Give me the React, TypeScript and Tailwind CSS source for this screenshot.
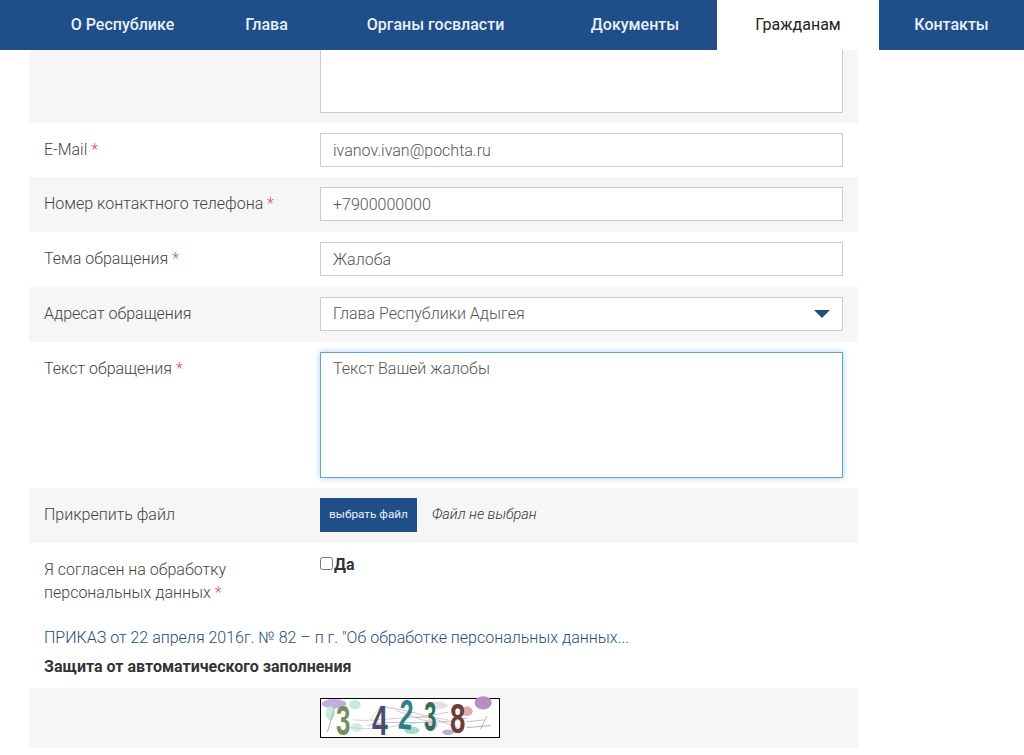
import React from "react";

const navItems = [
  { label: "О Республике", width: "w-[185px]" },
  { label: "Глава", width: "w-[103px]" },
  { label: "Органы госвласти", width: "w-[235px]" },
  { label: "Документы", width: "w-[164px]" },
  { label: "Гражданам", width: "w-[162px]", active: true },
  { label: "Контакты", width: "w-[145px]" },
];

const inputClass =
  "block w-[523px] h-[34px] border border-[#cccccc] bg-white px-[12px] text-[16px] font-light text-[#555] outline-none";

const Star = () => <span className="text-[#d9534f]"> *</span>;

const Row: React.FC<{
  gray?: boolean;
  height: string;
  label?: React.ReactNode;
  children: React.ReactNode;
}> = ({ gray, height, label, children }) => (
  <div className={`flex ${height} ${gray ? "bg-[#f6f6f6]" : "bg-white"}`}>
    <div className="w-[291px] pt-[15px] pl-[15px] text-[16px] leading-[23px] font-light text-[#444]">
      {label}
    </div>
    <div className="pt-[10px]">{children}</div>
  </div>
);

const Captcha = () => (
  <svg width="180" height="40" viewBox="0 0 180 40" className="block overflow-visible border border-black bg-white">
    <ellipse cx="10" cy="5" rx="13" ry="5" fill="#c3aedb" />
    <ellipse cx="32" cy="6" rx="6" ry="5" fill="#c8e8da" />
    <ellipse cx="6" cy="15" rx="5" ry="7" fill="#c6ecd8" />
    <ellipse cx="167" cy="4" rx="9" ry="7" fill="#b48fc6" />
    <ellipse cx="150" cy="13" rx="6" ry="5" fill="#e3abab" />
    <ellipse cx="92" cy="33" rx="8" ry="4" fill="#a8dcc0" />
    <ellipse cx="112" cy="27" rx="7" ry="6" fill="#f2cfcf" />
    <ellipse cx="130" cy="35" rx="6" ry="3" fill="#b9b0e0" />
    <ellipse cx="118" cy="7" rx="12" ry="4" fill="#e2e2e2" />
    <ellipse cx="34" cy="30" rx="6" ry="5" fill="#d5eee0" />
    <g fill="none" strokeWidth="0.8">
      <path d="M3 35 L11 8" stroke="#999" />
      <path d="M30 22 C60 25 95 14 130 22" stroke="#e4b7a0" />
      <path d="M45 28 C70 20 110 30 150 20" stroke="#b5a5d8" />
      <path d="M60 8 C90 12 110 18 140 30" stroke="#b5b5b5" />
      <path d="M25 30 C60 34 80 26 110 24" stroke="#a6d8d8" />
      <path d="M150 30 L175 28" stroke="#999" />
      <path d="M164 32 L171 18" stroke="#999" />
      <path d="M95 20 L130 14" stroke="#d7a8c8" />
      <path d="M48 22 L60 6" stroke="#c8c8c8" />
      <path d="M75 12 L120 28" stroke="#c7b6e2" />
      <path d="M150 24 L168 22" stroke="#aaa" />
    </g>
    <g fontFamily="'Liberation Sans', sans-serif" fontWeight="700" fontSize="44">
      <text transform="translate(12 38) scale(0.62 1)" fill="#748f66">3</text>
      <text transform="translate(50 38) scale(0.68 1)" fill="#454f70">4</text>
      <text transform="translate(77 31) rotate(5) scale(0.6 1)" fill="#2f7f86">2</text>
      <text transform="translate(105 34) scale(0.52 1)" fill="#2f6f58">3</text>
      <text transform="translate(132 36) scale(0.66 1)" fill="#6b4038">8</text>
    </g>
  </svg>
);

export default function App() {
  return (
    <div className="h-[755px] w-[1024px] overflow-hidden bg-white font-['Roboto',sans-serif]">
      <nav className="flex h-[50px] bg-[#1f4e89] pl-[30px]">
        {navItems.map((item) => (
          <div
            key={item.label}
            className={`${item.width} flex h-full shrink-0 items-center justify-center text-[16px] ${
              item.active ? "bg-white font-normal text-[#222]" : "font-medium text-[#e8f1f8]"
            }`}
          >
            {item.label}
          </div>
        ))}
      </nav>

      <div className="ml-[29px] w-[829px]">
        <div className="flex h-[73px] bg-[#f6f6f6]">
          <div className="ml-[291px] h-[63px] w-[523px] border border-t-0 border-[#cccccc] bg-white" />
        </div>

        <Row height="h-[54px]" label={<>E-Mail<Star /></>}>
          <input className={inputClass} value="ivanov.ivan@pochta.ru" readOnly />
        </Row>
        <Row gray height="h-[55px]" label={<>Номер контактного телефона<Star /></>}>
          <input className={inputClass} value="+7900000000" readOnly />
        </Row>
        <Row height="h-[55px]" label={<>Тема обращения<Star /></>}>
          <input className={inputClass} value="Жалоба" readOnly />
        </Row>
        <Row gray height="h-[55px]" label="Адресат обращения">
          <div className={`${inputClass} flex items-center justify-between pr-[12px]`}>
            <span>Глава Республики Адыгея</span>
            <span className="h-0 w-0 border-x-[8px] border-t-[8px] border-x-transparent border-t-[#1f4e79]" />
          </div>
        </Row>
        <Row height="h-[146px]" label={<>Текст обращения<Star /></>}>
          <textarea
            className="block h-[126px] w-[523px] resize-none border border-[#66a3d2] bg-white px-[12px] py-[5px] text-[16px] leading-[22px] font-light text-[#555] shadow-[0_0_6px_rgba(102,175,233,0.6)] outline-none"
            value="Текст Вашей жалобы"
            readOnly
          />
        </Row>
        <Row gray height="h-[55px]" label="Прикрепить файл">
          <div className="flex h-[34px] items-center">
            <button className="h-[34px] w-[97px] bg-[#1f4e89] text-[11.8px] text-[#e8f1f8]">выбрать файл</button>
            <span className="ml-[15px] text-[14.4px] font-light text-[#333] italic">Файл не выбран</span>
          </div>
        </Row>

        <div className="flex h-[83px] bg-white">
          <div className="w-[291px] pt-[15px] pl-[15px] text-[16px] leading-[23px] font-light text-[#444]">
            Я согласен на обработку
            <br />
            персональных данных<Star />
          </div>
          <label className="flex h-[22px] items-start pt-[11px] text-[16px] leading-[22px] font-bold text-[#333]">
            <input type="checkbox" className="mt-[3px] h-[13px] w-[13px]" />
            <span className="ml-px">Да</span>
          </label>
        </div>

        <div className="pl-[15px] text-[16px] leading-[23px] font-light text-[#1f4e79]">
          ПРИКАЗ от 22 апреля 2016г. № 82 – п г. "Об обработке персональных данных...
        </div>
        <div className="mt-[6px] pl-[15px] text-[16px] leading-[23px] font-bold text-[#333]">
          Защита от автоматического заполнения
        </div>

        <div className="mt-[10px] h-[60px] bg-[#f6f6f6] pt-[10px] pl-[291px]">
          <Captcha />
        </div>
      </div>
    </div>
  );
}
